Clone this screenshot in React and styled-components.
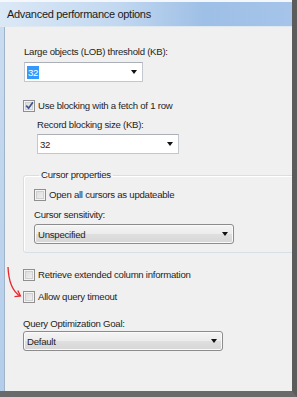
import React from 'react'
import styled, { createGlobalStyle } from 'styled-components'

const Global = createGlobalStyle`
  html, body {
    margin: 0;
    padding: 0;
    background: #6d6d6d;
  }
  body {
    width: 297px;
    height: 397px;
    overflow: hidden;
    font-family: "Liberation Sans", Arial, sans-serif;
  }
`;

const Window = styled.div`
  width: 297px;
  height: 397px;
  display: flex;
  flex-direction: column;
  background: #c4d8ee;
  box-sizing: border-box;
  border-right: 5px solid #5c5c5c;
  border-bottom: 6px solid #6a6a6a;
`;

const TitleBar = styled.div`
  height: 27px;
  flex: none;
  box-sizing: border-box;
  border-top: 2px solid #f4f8fc;
  border-bottom: 1px solid #dfe7ef;
  background: linear-gradient(90deg, #dbe8f6 0%, #c2d8f0 40%, #9ebfe6 70%, #a6c4e9 100%);
  display: flex;
  align-items: center;
  padding-left: 7px;
  font-size: 11px;
  letter-spacing: -0.3px;
  color: #1b1b1b;
`;

const Body = styled.div`
  flex: 1;
  display: flex;
  min-height: 0;
`;

const Frame = styled.div`
  width: 4px;
  flex: none;
  background: linear-gradient(180deg, #c9dcf1, #b3cdea);
  border-right: 1px solid #9fb3c9;
`;

const Content = styled.div`
  flex: 1;
  position: relative;
  overflow: hidden;
  background: #f0f0f0;
  padding: 19px 0 0 18px;
  font-size: 9.6px;
  letter-spacing: -0.25px;
  color: #1e1e1e;
`;

const Label = styled.div`
  line-height: 12px;
  height: 12px;
  margin-top: ${p => p.$top || 0}px;
  margin-left: ${p => p.$indent || 0}px;
`;

const Combo = styled.div`
  box-sizing: border-box;
  width: ${p => p.$w}px;
  height: 20px;
  margin-top: ${p => p.$top || 0}px;
  margin-left: ${p => p.$indent || 0}px;
  display: flex;
  align-items: center;
  justify-content: space-between;
  padding: 0 5px 0 2px;
  background: #fff;
  border: 1px solid #c3c8cf;
  border-top-color: #abb0b8;
`;

const DropButton = styled.div`
  box-sizing: border-box;
  width: ${p => p.$w}px;
  height: 20px;
  margin-top: ${p => p.$top || 0}px;
  margin-left: ${p => p.$indent || 0}px;
  display: flex;
  align-items: center;
  justify-content: space-between;
  padding: 0 5px 0 3px;
  border: 1px solid #8c8c8c;
  border-radius: 3px;
  background: linear-gradient(180deg, #f4f4f4 0%, #ececec 48%, #dfdfdf 52%, #d6d6d6 100%);
  box-shadow: inset 0 0 0 1px #fafafa;
`;

const Selected = styled.span`
  background: #3399ff;
  color: #fff;
  padding: 0 1px;
  line-height: 13px;
`;

const Arrow = styled.span`
  width: 0;
  height: 0;
  border-left: 3.5px solid transparent;
  border-right: 3.5px solid transparent;
  border-top: 4px solid #111;
`;

const CheckRow = styled.div`
  display: flex;
  align-items: center;
  gap: 3px;
  height: 13px;
  margin-top: ${p => p.$top || 0}px;
  margin-left: ${p => p.$indent || 0}px;
`;

const Box = styled.span`
  box-sizing: border-box;
  width: 12px;
  height: 12px;
  flex: none;
  border: 1px solid #8f8f8f;
  background: linear-gradient(135deg, #d8d8d8, #f4f4f4);
  box-shadow: inset 0 0 0 1px #f4f4f4, inset 0 0 0 2px #cfcfcf;
  display: flex;
  align-items: center;
  justify-content: center;
`;

const Group = styled.fieldset`
  margin: 15px 0 0 0;
  padding: 3px 0 8px 10px;
  width: 300px;
  border: 1px solid #d5dfe5;
  border-radius: 3px;
  box-shadow: inset 1px 1px 0 #fff;
  legend {
    padding: 0 2px;
    margin-left: 5px;
    line-height: 12px;
  }
`;

const Annotation = styled.svg`
  position: absolute;
  left: 0;
  top: 236px;
`;

const Check = () => (
  <svg width="9" height="9" viewBox="0 0 9 9">
    <path d="M1.2 4.6 L3.6 7.2 L7.9 1.2" fill="none" stroke="#3d5591" strokeWidth="1.7" />
  </svg>
)

export default function App() {
  return (
    <>
      <Global />
      <Window>
        <TitleBar>Advanced performance options</TitleBar>
        <Body>
          <Frame />
          <Content>
            <Label $indent={1}>Large objects (LOB) threshold (KB):</Label>
            <Combo $w={119} $top={4} $indent={1}>
              <Selected>32</Selected>
              <Arrow />
            </Combo>
            <CheckRow $top={17}>
              <Box><Check /></Box>
              Use blocking with a fetch of 1 row
            </CheckRow>
            <Label $top={7} $indent={14}>Record blocking size (KB):</Label>
            <Combo $w={142} $top={3} $indent={14}>
              <span>32</span>
              <Arrow />
            </Combo>
            <Group>
              <legend>Cursor properties</legend>
              <CheckRow $top={4}>
                <Box />
                Open all cursors as updateable
              </CheckRow>
              <Label $top={8}>Cursor sensitivity:</Label>
              <DropButton $w={200} $top={3}>
                <span>Unspecified</span>
                <Arrow />
              </DropButton>
            </Group>
            <CheckRow $top={15}>
              <Box />
              Retrieve extended column information
            </CheckRow>
            <CheckRow $top={9}>
              <Box />
              Allow query timeout
            </CheckRow>
            <Label $top={15}>Query Optimization Goal:</Label>
            <DropButton $w={200} $top={1}>
              <span>Default</span>
              <Arrow />
            </DropButton>
            <Annotation width="22" height="40" viewBox="0 0 22 40">
              <path d="M3 4 C3.5 16 7 28 15 33" fill="none" stroke="#e8262a" strokeWidth="1.3" />
              <path d="M9.5 33.6 L15.5 33 L12.8 27.5" fill="none" stroke="#e8262a" strokeWidth="1.3" />
            </Annotation>
          </Content>
        </Body>
      </Window>
    </>
  )
}
